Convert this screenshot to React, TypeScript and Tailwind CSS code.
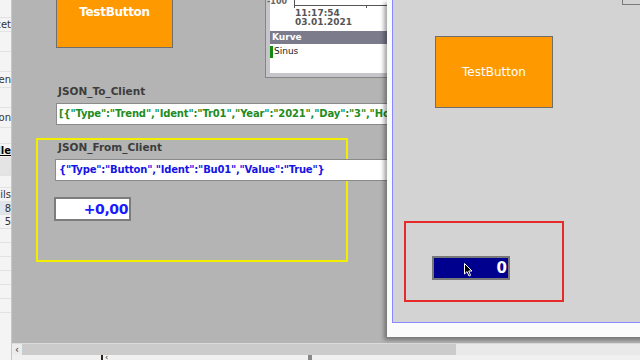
const sideRows = [
    { h: 18, text: "", bg: "" },
    { h: 14, text: "Parcet", bg: "" },
    { h: 20, text: "", bg: "" },
    { h: 20, text: "", bg: "" },
    { h: 16, text: "Sichten", bg: "" },
    { h: 20, text: "", bg: "" },
    { h: 20, text: "Station", bg: "" },
    { h: 16, text: "", bg: "" },
    { h: 14, text: "Verbindungsschnittstelle", bg: "" },
    { h: 18, text: "", bg: "bg-[#e4e4e4]" },
    { h: 12, text: "", bg: "" },
    { h: 14, text: "Details", bg: "" },
    { h: 13, text: "8", bg: "bg-[#dfe6ee]" },
    { h: 14, text: "5", bg: "" },
    { h: 14, text: "", bg: "" },
    { h: 14, text: "", bg: "" },
    { h: 14, text: "", bg: "" },
    { h: 14, text: "", bg: "" },
    { h: 14, text: "", bg: "" },
    { h: 14, text: "", bg: "" },
];

function SidePanel() {
    return (
        <div className="w-[12px] h-full flex flex-col overflow-hidden bg-[#f4f4f4] border-r border-[#c8c8c8]">
            {sideRows.map((row, i) => (
                <div
                    key={i}
                    style={{ height: row.h }}
                    className={`shrink-0 flex items-center justify-end overflow-hidden border-b border-[#e2e2e2] ${row.bg}`}
                >
                    <span
                        className={`whitespace-nowrap text-[10px] text-[#333] ${
                            i === 8 ? "underline font-bold text-black" : ""
                        }`}
                    >
                        {row.text}
                    </span>
                </div>
            ))}
        </div>
    );
}

function TrendView() {
    return (
        <div className="absolute left-[253px] top-[-6px] w-[140px] h-[84px] border border-[#858585] bg-[#c6c6ca] p-[4px] pr-0">
            <div className="h-full bg-white flex flex-col">
                <div className="relative h-[32px] shrink-0">
                    <span className="absolute left-[-3px] top-[-1px] text-[8px] leading-none text-[#666] font-bold">
                        -100
                    </span>
                    <div className="absolute left-[24px] top-0 w-px h-[9px] bg-[#555]" />
                    <div className="absolute left-[24px] top-[6px] right-0 h-px bg-[#555]" />
                    <div className="absolute left-[96px] top-[6px] w-px h-[3px] bg-[#555]" />
                    <div className="absolute left-[25px] top-[10px] flex flex-col text-[9px] leading-[9px] font-bold text-[#555] font-['DejaVu_Sans',sans-serif]">
                        <span>11:17:54</span>
                        <span>03.01.2021</span>
                    </div>
                </div>
                <div className="h-[13px] shrink-0 bg-[#7b7b8c] flex items-center pl-[2px] text-[9px] font-bold text-white">
                    Kurve
                </div>
                <div className="h-[13px] shrink-0 flex items-center gap-[1px] mt-px">
                    <div className="w-[3px] h-[12px] bg-[#118a11]" />
                    <span className="text-[9px] text-[#222]">Sinus</span>
                </div>
            </div>
        </div>
    );
}

function Cursor() {
    return (
        <svg width="9" height="14" viewBox="0 0 9 14" className="absolute left-[71px] top-[266px]">
            <path d="M0.5 0.5 L0.5 11 L3 8.6 L5 13 L6.6 12.3 L4.7 8 L8 8 Z" fill="#000" stroke="#fff" strokeWidth="1" />
        </svg>
    );
}

function HmiWindow() {
    return (
        <div className="absolute left-[387px] top-0 w-[260px] h-[337px] bg-[#fbfbfb] shadow-[-3px_3px_4px_rgba(0,0,0,0.35)]">
            <div className="absolute left-[5px] top-[-4px] right-0 bottom-[14px] border border-[#8888ff] bg-[#d3d3d3] overflow-hidden">
                <div className="absolute left-[229px] top-[-6px] w-[30px] h-[14px] border border-[#7a7a7a]" />
                <div className="absolute left-[42px] top-[39px] w-[118px] h-[72px] bg-[#ff9900] border border-[#6e6e6e] flex items-center justify-center">
                    <span className="text-[12px] text-white font-['DejaVu_Sans',sans-serif]">TestButton</span>
                </div>
                <div className="absolute left-[11px] top-[224px] w-[160px] h-[81px] border-2 border-[#e62a2a]" />
                <div className="absolute left-[39px] top-[259px] w-[78px] h-[24px] bg-[#00008e] border-2 border-[#787878] flex items-center justify-end pr-[1px]">
                    <span className="text-[15px] font-bold text-white font-['DejaVu_Sans',sans-serif]">0</span>
                </div>
                <Cursor />
            </div>
        </div>
    );
}

function Canvas() {
    return (
        <div className="relative flex-1 bg-[#b4b4b4] overflow-hidden font-['DejaVu_Sans',sans-serif]">
            <div className="absolute left-[44px] top-[-24px] w-[117px] h-[72px] bg-[#ff9900] border border-[#6e6e6e] flex items-center justify-center">
                <span className="text-[12px] font-bold text-[#fff] tracking-[-0.3px]">TestButton</span>
            </div>

            <TrendView />

            <div className="absolute left-[46px] top-[84px] flex flex-col gap-[3px] w-[360px]">
                <span className="text-[10.5px] font-bold text-[#3c3c3c]">JSON_To_Client</span>
                <div className="h-[22px] ml-[-2px] bg-white border border-[#8a8a8a] flex items-center pl-[2px] overflow-hidden">
                    <span className="whitespace-nowrap text-[10px] font-bold text-[#228b22] tracking-[-0.15px]">
                        {'[{"Type":"Trend","Ident":"Tr01","Year":"2021","Day":"3","Hour":"11"}]'}
                    </span>
                </div>
            </div>

            <div className="absolute left-[24px] top-[138px] w-[312px] h-[124px] border-2 border-[#f2f000]" />

            <div className="absolute left-[46px] top-[140px] flex flex-col gap-[3px] w-[360px]">
                <span className="text-[10.5px] font-bold text-[#3c3c3c]">JSON_From_Client</span>
                <div className="h-[22px] ml-[-3px] bg-white border border-[#8a8a8a] flex items-center pl-[3px] overflow-hidden">
                    <span className="whitespace-nowrap text-[10px] font-bold text-[#1414e6] tracking-[-0.2px]">
                        {'{"Type":"Button","Ident":"Bu01","Value":"True"}'}
                    </span>
                </div>
            </div>

            <div className="absolute left-[42px] top-[197px] w-[77px] h-[24px] bg-white border-2 border-[#7c7c7c] flex items-center justify-end pr-[1px]">
                <span className="text-[14px] font-bold text-[#1a1aff] tracking-[-0.4px]">+0,00</span>
            </div>
        </div>
    );
}

function ScrollBar() {
    return (
        <div className="h-[12px] shrink-0 flex bg-[#d0d0d0] border-t border-[#dcdcdc]">
            <div className="w-[10px] flex items-center justify-center bg-[#ececec] text-[10px] leading-none text-[#333]">
                ‹
            </div>
            <div className="w-[434px] bg-[#cbcbcb]" />
            <div className="flex-1 bg-[#e9e9e9]" />
        </div>
    );
}

export default function App() {
    return (
        <div className="w-[640px] h-[360px] relative overflow-hidden flex bg-[#f2f2f2] font-['DejaVu_Sans',sans-serif]">
            <SidePanel />
            <div className="flex-1 flex flex-col">
                <Canvas />
                <ScrollBar />
                <div className="h-[5px] shrink-0 flex items-start bg-[#f0f0f0] relative">
                    <div className="ml-[89px] w-[2px] h-[5px] bg-[#222]" />
                    <span className="ml-[2px] text-[8px] leading-[5px] text-[#333]">‹</span>
                    <div className="ml-[200px] w-[4px] h-[5px] bg-[#888]" />
                </div>
            </div>
            <HmiWindow />
        </div>
    );
}
